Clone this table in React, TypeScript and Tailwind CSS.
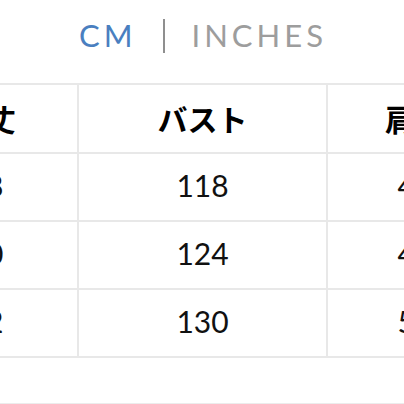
const rows = [
  { length: '68', bust: '118', shoulder: '46' },
  { length: '70', bust: '124', shoulder: '48' },
  { length: '72', bust: '130', shoulder: '50' },
]

export default function App() {
  return (
    <div className="h-[404px] w-[404px] overflow-hidden bg-white">
      <div className="flex h-[70px] items-center justify-center pr-[2px] pt-[1px] font-['Lato',sans-serif] text-[31px] font-normal leading-none tracking-[4px]">
        <span className="mr-[-4px] text-[#4a7fc0]">CM</span>
        <span className="ml-[30px] mr-[27px] h-[34px] w-[2px] bg-[#8f8f8f]" />
        <span className="mr-[-4px] text-[#9d9d9d]">INCHES</span>
      </div>
      <div className="ml-[-107px] mt-[13px] w-max">
        <table className="border-collapse">
          <thead>
            <tr className="h-[69px]">
              <th className="w-[184px] border-2 border-[#e8e8e8] font-['Noto_Sans_CJK_JP',sans-serif] text-[30px] font-bold text-black">着丈</th>
              <th className="w-[249px] border-2 border-[#e8e8e8] font-['Noto_Sans_CJK_JP',sans-serif] text-[30px] font-bold text-black">バスト</th>
              <th className="w-[176px] border-2 border-[#e8e8e8] font-['Noto_Sans_CJK_JP',sans-serif] text-[30px] font-bold text-black">肩幅</th>
            </tr>
          </thead>
          <tbody className="font-['Lato',sans-serif] text-[30px] text-[#111]">
            {rows.map((r) => (
              <tr key={r.bust} className="h-[68px]">
                <td className="border-2 border-[#e8e8e8] pb-[4px] text-center">{r.length}</td>
                <td className="border-2 border-[#e8e8e8] pb-[4px] text-center">{r.bust}</td>
                <td className="border-2 border-[#e8e8e8] pb-[4px] text-center">{r.shoulder}</td>
              </tr>
            ))}
          </tbody>
        </table>
      </div>
      <div className="mt-[45px] border-t-2 border-[#ececec]" />
    </div>
  )
}
